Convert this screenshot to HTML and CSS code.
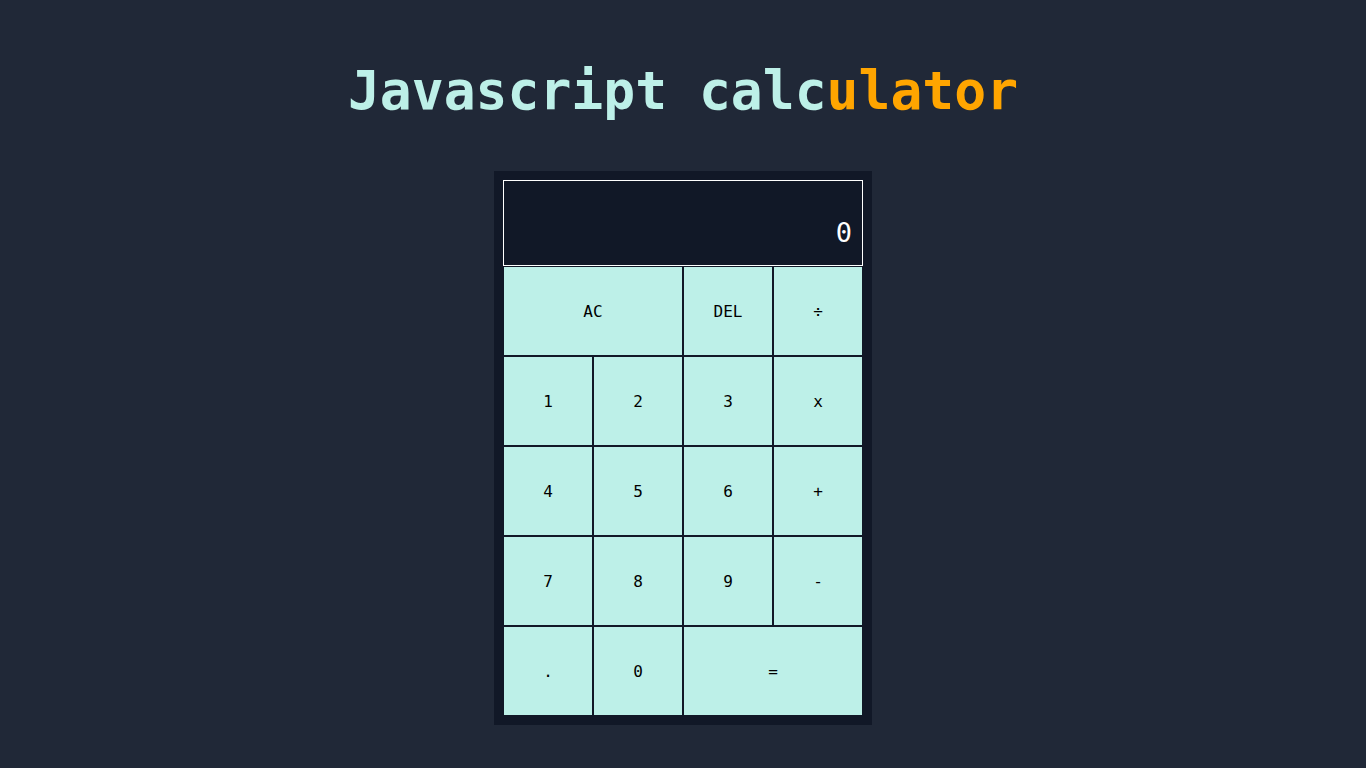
FILE: index.html
```html
<!DOCTYPE html>
<html lang="en">
<head>
<meta charset="utf-8">
<title>Javascript calculator</title>
<link rel="stylesheet" href="styles.css">
</head>
<body>
<h1 class="title">Javascript calc<span class="accent">ulator</span></h1>
<div class="calculator">
  <div class="display"><span class="current">0</span></div>
  <button class="key span-2">AC</button>
  <button class="key">DEL</button>
  <button class="key">÷</button>
  <button class="key">1</button>
  <button class="key">2</button>
  <button class="key">3</button>
  <button class="key">x</button>
  <button class="key">4</button>
  <button class="key">5</button>
  <button class="key">6</button>
  <button class="key">+</button>
  <button class="key">7</button>
  <button class="key">8</button>
  <button class="key">9</button>
  <button class="key">-</button>
  <button class="key">.</button>
  <button class="key">0</button>
  <button class="key span-2">=</button>
</div>
</body>
</html>
```
FILE: styles.css
```css
* { box-sizing: border-box; }
html, body { margin: 0; padding: 0; }
body {
  background: #202837;
  font-family: "DejaVu Sans Mono", monospace;
  display: flex;
  flex-direction: column;
  align-items: center;
  min-height: 100vh;
}
.title {
  margin: 56px 0 0;
  font-size: 53px;
  line-height: 70px;
  font-weight: bold;
  color: #bdf0e8;
  letter-spacing: 0;
}
.accent { color: #ffa500; }
.calculator {
  margin-top: 45px;
  background: #111827;
  padding: 9px;
  display: grid;
  grid-template-columns: repeat(4, 90px);
  grid-template-rows: 86px repeat(5, 90px);
}
.display {
  grid-column: 1 / -1;
  border: 1px solid #ffffff;
  background: #111827;
  color: #ffffff;
  display: flex;
  align-items: flex-end;
  justify-content: flex-end;
  padding: 0 10px 19px;
  font-size: 27px;
  line-height: 1;
}
.key {
  background: #bdf0e8;
  border: 1px solid #111827;
  font-family: "DejaVu Sans Mono", monospace;
  font-size: 16px;
  color: #000;
  padding: 0;
  margin: 0;
  cursor: pointer;
}
.span-2 { grid-column: span 2; }
```
